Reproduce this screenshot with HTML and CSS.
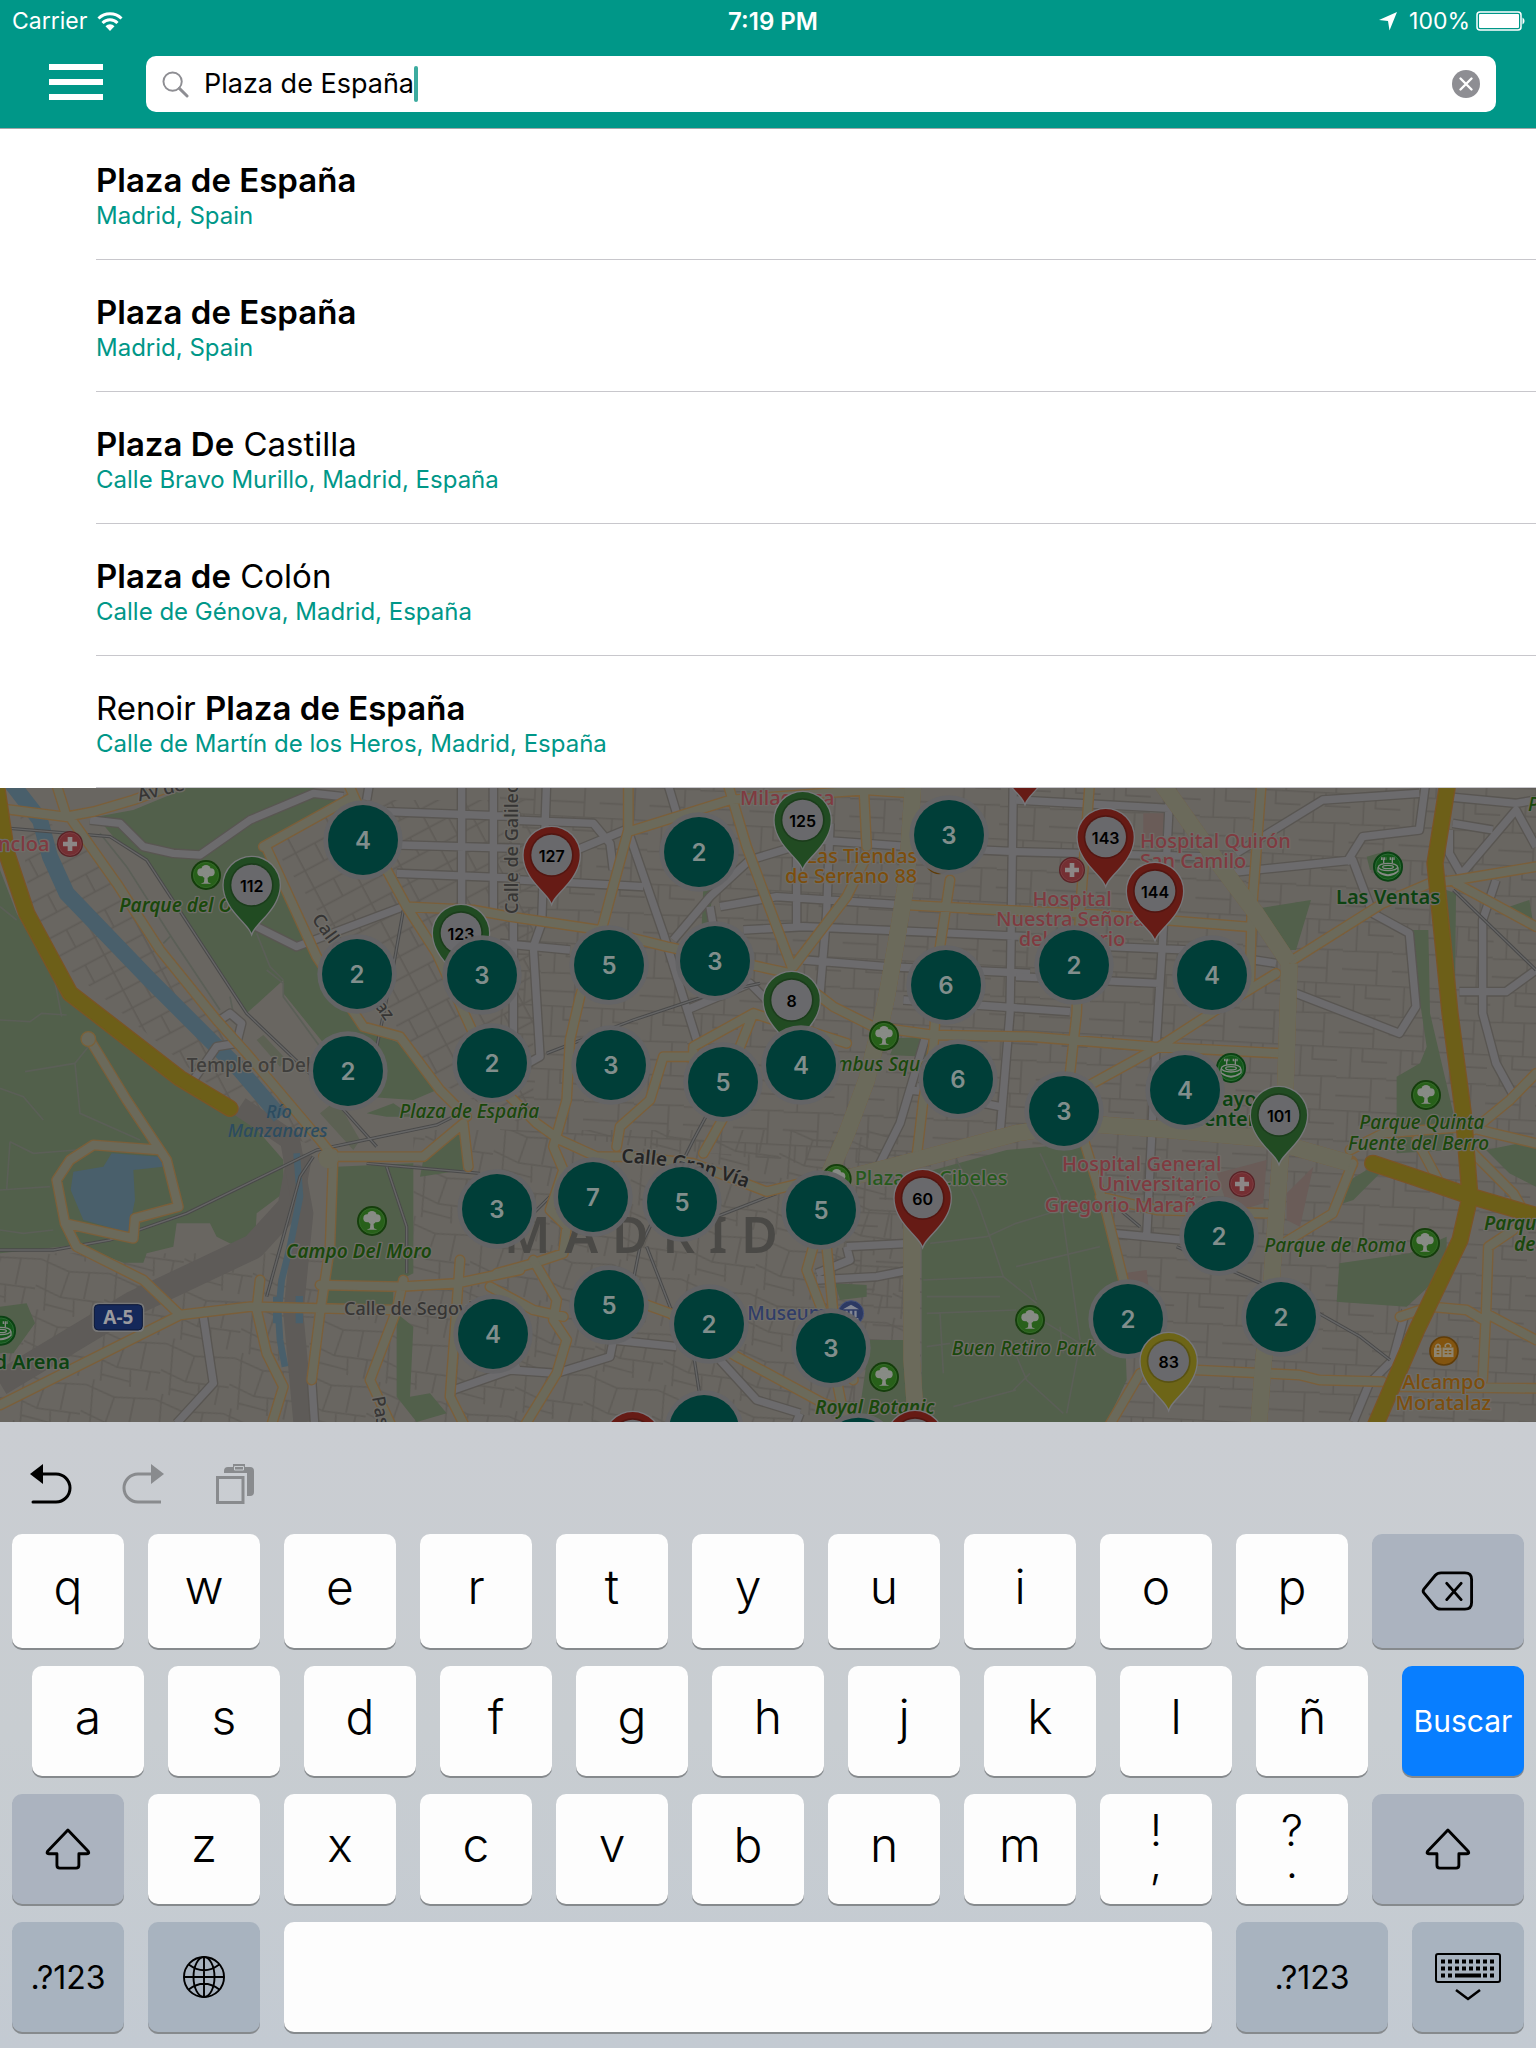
FILE: index.html
```html
<!DOCTYPE html>
<html lang="es">
<head>
<meta charset="utf-8">
<meta name="viewport" content="width=device-width, initial-scale=1">
<title>Plaza de España</title>
<link rel="stylesheet" href="styles.css">
</head>
<body>
<header class="header">
  <div class="status">
    <div class="status-side">
      <span>Carrier</span>
      <svg class="wifi" viewBox="0 0 26 20" aria-hidden="true"><g fill="none" stroke="#fff" stroke-width="3"><path d="M1.500 7.500a16.500 16.500 0 0 1 23 0"/><path d="M5.500 12a10.500 10.500 0 0 1 15 0"/></g><path d="M13 20l-4.500-4.800a6.200 6.200 0 0 1 9 0z" fill="#fff"/></svg>
    </div>
    <time class="clock">7:19 PM</time>
    <div class="status-side status-right">
      <svg class="arrow" viewBox="0 0 18 20" aria-hidden="true"><path d="M18 1L10.500 19.500L9 10L0 9z" fill="#fff"/></svg>
      <span class="percent">100%</span>
      <svg class="battery" viewBox="0 0 50 20" aria-hidden="true"><rect x="1" y="1" width="44" height="18" rx="3" fill="none" stroke="#fff" stroke-width="1.500"/><rect x="3" y="3" width="40" height="14" rx="1" fill="#fff"/><path d="M46.500 6.500a4 4 0 0 1 0 7z" fill="#fff"/></svg>
    </div>
  </div>
  <div class="bar">
    <button class="menu" type="button" aria-label="Menú"><span></span><span></span><span></span></button>
    <form class="search" role="search">
      <svg class="lens" viewBox="0 0 28 28" aria-hidden="true"><g fill="none" stroke="#8e8e93" stroke-width="2"><circle cx="11" cy="11" r="9.500"/><path d="M18 18l8 8" stroke-width="3" stroke-linecap="round"/></g></svg>
      <input class="query" type="text" value="Plaza de España" aria-label="Buscar">
      <span class="caret"></span>
      <button class="clear" type="button" aria-label="Borrar"><svg viewBox="0 0 28 28"><circle cx="14" cy="14" r="14" fill="#8e8e93"/><path d="M8.500 8.500l11 11M19.500 8.500l-11 11" stroke="#fff" stroke-width="2.400" stroke-linecap="round"/></svg></button>
    </form>
  </div>
</header>
<main class="content">
<ul class="results">
  <li><a href="#"><span class="title"><b>Plaza de España</b></span><span class="place">Madrid, Spain</span></a></li>
  <li><a href="#"><span class="title"><b>Plaza de España</b></span><span class="place">Madrid, Spain</span></a></li>
  <li><a href="#"><span class="title"><b>Plaza De</b> Castilla</span><span class="place">Calle Bravo Murillo, Madrid, España</span></a></li>
  <li><a href="#"><span class="title"><b>Plaza de</b> Colón</span><span class="place">Calle de Génova, Madrid, España</span></a></li>
  <li><a href="#"><span class="title">Renoir <b>Plaza de España</b></span><span class="place">Calle de Martín de los Heros, Madrid, España</span></a></li>
</ul>
<div class="map">
<svg viewBox="0 24 4608 1902" preserveAspectRatio="xMidYMid slice">
<defs>
  <pattern id="blocks" width="150" height="190" patternUnits="userSpaceOnUse" patternTransform="rotate(3)"><path d="M0 20H150M0 112L150 108M40 20V110M105 110V210M105 0V20M0 165H105M75 20V60H150" class="block"/></pattern>
  <pattern id="blocks-slant" width="130" height="120" patternUnits="userSpaceOnUse" patternTransform="rotate(-28)"><path d="M0 10H130M0 70H130M30 0V120M95 10V70" class="block"/></pattern>
  <pattern id="blocks-old" width="210" height="170" patternUnits="userSpaceOnUse" patternTransform="rotate(12)"><path d="M0 20L90 40L210 20M20 20L40 170M90 40L80 120L210 110M150 30V110M80 120L0 100M120 115L130 170M20 0V20M40 150L130 155M180 110V170" class="block"/></pattern>
  <g id="cluster"><circle r="119" fill="#646466" opacity=".95"/><circle r="105" fill="#003e38"/></g>
  <path id="drop" d="M0 144C-12 112-84 70-84 0A84 84 0 1 1 84 0C84 70 12 112 0 144z"/>
  <g id="pin"><use href="#drop" stroke="#77777a" stroke-width="8"/><use href="#drop"/><circle r="66" fill="#000" opacity=".18"/><circle r="61" fill="#69696c"/></g>
  <g id="tree"><circle r="45" fill="#153e0c"/><circle r="38" fill="#28601a" stroke="#3c7430" stroke-width="2"/><g fill="#878b85"><circle cx="-14" cy="-8" r="12"/><circle cx="14" cy="-8" r="12"/><circle cy="-16" r="14"/><circle cy="-3" r="12"/><path d="M-4 0h8l2 22 10 4h-32l10-4z"/></g></g>
  <g id="arena"><circle r="45" fill="#0a4213"/><circle r="38" fill="#14571b" stroke="#387841" stroke-width="2"/><g fill="none" stroke="#858985" stroke-width="4"><ellipse cy="1" rx="29" ry="11"/><ellipse cy="1" rx="16" ry="5"/><path d="M-30 2v12q30 22 60 0V2M-13-10v-14M13-10v-14M-28 16q28 22 56 0"/><path d="M-21-24h16M5-24h16" stroke-width="8" stroke-dasharray="5 2"/></g></g>
  <g id="hospital"><circle r="39" fill="#5a2226"/><circle r="34" fill="#742f33" stroke="#85494c" stroke-width="2"/><path d="M-7-21H7V-7H21V7H7V21H-7V7H-21V-7H-7z" fill="#8c8686"/></g>
</defs>

<rect width="4608" height="1950" fill="#696661"/>
<g>
  <path fill="url(#blocks)" d="M1500 0H4608V1950H2500L2400 1150L1500 1050zM3300 1100H4608V1950H3300z"/>
  <path fill="url(#blocks-slant)" d="M820 200L1060 60H1600V1050L1300 900zM60 100L230 160L950 1100L780 1040L100 480z"/>
  <path fill="url(#blocks-old)" d="M1240 1050L2750 1050V1950H0V1420H1240z"/>
</g>

<g fill="#52604b">
  <path d="M0 270L50 400 200 660 550 920 700 1000 720 990 850 1140V1240L770 1300 765 1380 700 1395 650 1370 630 1330H530L520 1400 440 1420 430 1448H370L230 1395 0 1420z"/>
  <path d="M290 110L400 90 560 24H940L1020 70 790 200 950 540 1080 740 1200 790 1310 930 1240 960 1100 950 850 640V600L740 700 660 580 440 240 340 170z"/>
  <path d="M1010 1160L1240 1150V1480L1190 1505H980zM975 1530H1180V1580H970zM1270 1140L1390 1040V1170L1260 1190zM1190 1600L1240 1640 1230 1850 1290 1840 1340 1900 1250 1926 1190 1850zM1100 1000L1180 970 1240 1010 1160 1010z"/>
  <path d="M2765 1180L3020 1110 3240 1090 3370 1500 3380 1800 3310 1950H2765zM2610 1680H2720V1950H2570zM2505 1510L2600 1515 2600 1550 2520 1560z"/>
  <path d="M4228 450H4285L4290 700 4360 1000V1110L4190 1120V890L4260 850 4280 800zM4338 330L4368 340 4365 640 4340 620zM3778 385L3933 360 3888 510H3858zM4018 1450L4228 1420 4340 1370V1470L4220 1580 4010 1565zM4458 1110L4608 1080V1220L4528 1180zM4528 380L4588 360 4598 420zM2690 775L2780 770V830L2670 825zM4050 1200L4100 1170 4140 1180 4060 1260 4030 1270zM4100 230L4170 210 4180 260 4110 270zM0 1580L80 1570 105 1630 40 1720H0zM2110 320H2140L2125 440H2105z"/>
</g>
<g fill="none" stroke="#5e5b58" stroke-linejoin="round">
  <path d="M0 1810L400 1570 760 1400 870 1280 900 1120" stroke-width="75"/>
  <path d="M720 980L870 1080 910 1300 880 1600 910 1926" stroke-width="60"/>
</g>
<path fill="#5c6153" d="M960 1000L1010 960 1080 1080 1060 1110zM770 780L790 765 860 840 840 860z"/>
<g fill="#6a5c58"><path d="M3430 100H3500V180H3430zM3650 1180L3800 1140 3790 1270 3690 1300zM3860 1240L3940 1160 3900 1340 3860 1320zM3370 1480L3440 1470 3450 1560 3390 1540z"/></g>
<g fill="none" stroke="#495f6b" stroke-linejoin="round">
  <path d="M35 10L120 120 150 230 200 340 450 600 620 770 720 870 840 1010" stroke-width="48"/>
  <path d="M890 1120L900 1250 870 1400 845 1500 835 1600 840 1680 855 1760" stroke-width="20"/>
  <path d="M830 1550V1630M898 1548V1630" stroke-width="22"/>
</g>
<path fill="#495f6b" d="M220 1175L310 1160 335 1120 480 1130 490 1160 400 1170 405 1260 385 1358 250 1320 212 1230z"/>

<g class="path">
  <path d="M0 380L50 420M0 720L90 725 125 700 200 705M160 580L185 710M0 925L70 950 130 1020M75 875L225 850 240 1000 420 1080M225 850L265 800M30 1085L100 1120 230 1110M30 1085L20 1230M0 1350L70 1360 160 1350M0 1230L150 1220M300 160L380 260 520 480 660 690M490 490L510 470M700 700L690 650M770 460L810 560 850 600M800 570L850 610 850 650 960 800"/>
  <path d="M2790 1390L2960 1370 3048 1330 3180 1290M2870 1140L2930 1260 2980 1400 3010 1490 3110 1570M2770 1500L3010 1490M2780 1600L3048 1590M2780 1550L3000 1550M2820 1600L2830 1780M2780 1700L2850 1690M2860 1880L3048 1830M3048 1460L3300 1400M3120 1120L3180 1250 3240 1680M3090 1500L3110 1560M3090 1600L3240 1690 3200 1900M3050 1730L3080 1800 3190 1900M3090 1780L3040 1830M3180 1640L3190 1720"/>
</g>

<g class="street">
  <g id="streets"><path d="M270 120L360 130 430 200 520 220 600 225 750 120 940 40 1030 50M770 440L890 500 1210 380M580 900L650 800 710 790 725 730 690 700 660 720M1160 95L1560 110M1200 195L1560 205M1190 280L1560 295M1385 0V380M1480 0V390M1110 0L1100 60M1540 420V800"/>
  <path d="M1640 0L1625 430 1600 500 1620 830 1530 880M1530 120L1780 130 1830 190 1840 270M1730 210L1900 140M1560 300L1930 320M1890 170L1990 460 2090 780M2000 0L2030 100M2260 230L2130 350 2020 480M1500 490L1710 510M2250 240L2450 180 2730 200 3048 215 3608 230M2160 380L2330 350 2710 375M2230 450L2410 440 3090 470M2410 540L2660 560 3090 580M2060 690L2250 610 2390 750M2490 130L2480 400 2460 640M2390 230V440M3040 0L3030 700 3000 1060M2710 660L3210 695M2130 380L2140 440M2750 920L2900 960 3000 980"/>
  <path d="M3048 60L3508 85M3048 590L3478 610M3508 60L3488 480 3468 800 3440 1370M3328 500L3568 510 3828 550M3668 280L4058 240 4118 400 4228 460 4248 680 4198 760 3888 640M3708 220L3968 60 4258 40M4038 250L4088 170 4258 150 4278 0M4338 50L4548 70 4608 60M4378 290L4548 90 4608 200M4358 130L4478 150M4348 150V220L4388 290M4488 300L4448 420V700L4488 850 4548 960M4378 635H4518L4608 570M3338 1360L3548 1380M4218 1590L4178 1740 4108 1810 4060 1926M2540 1400L2730 1390M2540 1400L2550 1440 2450 1480M2450 1500L2630 1490 2730 1470M1530 1770L1670 1780 1830 1730 1840 1680 2030 1700M2160 1740L2270 1860 2400 1900M2400 1900L2380 1950M610 1610L640 1810 530 1930M935 1800L945 1950M1360 1830L1560 1760M2620 1190L2700 1030 2780 760M2730 930L2900 950"/></g>
</g>
<use href="#streets" class="street-fill"/>

<g class="rail">
  <g id="rails"><path d="M30 145L330 170 440 240 740 700 950 900 1130 1100M0 1410L160 1410 330 1380 560 1300 950 1110 1310 1035 1400 990M940 1130L900 1190 800 1550M1100 1150L1440 1180M1160 1160L1220 1340V1480M1210 390L1180 560 1120 850M1640 820L1900 720 2140 640 2280 610M1900 1500L1920 1400 2080 1080 2150 950M1940 1400L2010 1580 2080 1720 2100 1850M2150 1310L2330 1240M3300 1240L3420 1340M3530 1400L3850 1540 4080 1670 4170 1740M4360 330L4608 570M1600 1300L1700 1200"/></g>
</g>
<use href="#rails" class="rail-core"/>

<g class="road">
  <g id="roads"><path d="M0 85L210 112 350 310 480 510 650 720 740 820 960 1080 1000 1130M210 108L280 95 400 60 540 10M165 0L200 110M1060 50L790 200M800 205L950 530 1090 740 1200 770 1320 930 1400 1010M1040 0L1160 270 1220 380 1310 520 1420 760 1480 900 1610 1030 1680 1080 1790 1130 1900 1130 2080 1150 2300 1235 2380 1215 2480 1195M1220 380L1420 390 1530 410 1800 450 2000 500 2370 580M1885 0V150L1810 430 1740 650 1710 780 1700 960 1660 1100 1690 1170 1650 1290 1700 1340 1690 1420 1600 1450 1490 1480M1885 155L2190 60 2600 30 2740 40M2180 0L2240 200 2330 440 2375 560M2600 230L2540 350 2380 560M2370 580L2500 680 2620 740 2800 765 3090 770 3460 800 3840 820M2850 300L2820 500 2800 800 2770 960 2750 1130M2720 375L3000 390 3240 400 3740 440M3270 0L3240 400 3230 700 3210 880M3785 0L3755 400 3750 600M3878 540L4148 370 4288 310 4368 300 4608 260M4368 310L4608 440M3828 580L3648 690 3478 800 3278 910 3150 990M2540 790L2260 700 2080 800 2080 880M2260 700L2200 850M1850 1100L1860 1040 1950 960 1990 830 2070 830M2110 1120L2200 960M2590 0L2600 200"/>
  <path d="M270 780L380 960 480 1110 500 1140 535 1280 405 1315 400 1375 195 1330 170 1200 210 1140 280 1095 480 1110M195 1330L230 1400 430 1500 540 1605 750 1580 960 1585 1190 1590M0 1875L540 1605M780 1500L770 1590 800 1720 850 1820 810 1950M1000 1120L990 1400 960 1600 935 1800M970 1130H1270L1390 1030 1405 1160M960 1515L1200 1520 1370 1510 1560 1470M1210 1500L1190 1590 1110 1800 1180 1950M1380 1440L1350 1850 1400 1950M3248 1070L3320 1300 3370 1500M3588 1770L3898 1785 3958 1800 4148 1805M3420 1780L3320 1950M4058 1150L3998 1300 3850 1390M4540 1350L4465 1400 4458 1600 4608 1680M4458 1600L4448 1800M4200 1820L4608 1825M4050 1110L4150 1060 4400 1040 4480 1060 4608 1090M4400 1100L4540 1240 4580 1310M4608 880L4530 960 4420 1050M4200 1610L4290 1580 4400 1590 4450 1620M4250 1080L4330 1230M2440 1400L2420 1470 2470 1600 2540 1950M2480 1400L2500 1600 2560 1800M1600 1440L1670 1560 1660 1620 1700 1680 1670 1780 1560 1960M1470 1520L1600 1590 1690 1610M1900 1560L2010 1600 2210 1730 2470 1870 2560 1900M3300 1250L3470 1290 3800 1300"/></g>
  <g id="avenues"><path d="M2740 0L2720 300 2690 480 2660 650 2640 740 2600 900 2540 1060 2480 1200M3478 0L3648 240 3768 400 3868 550M3868 550L3855 960 3840 1150 3815 1500 3790 1750 3775 1950M2480 1210L2750 1140 3048 1060 3248 1030 3508 1050 3788 1075 4050 1150M2735 1250V1740L2750 1950"/></g>
</g>
<g class="road-fill"><use href="#roads"/></g>
<g class="avenue-fill"><use href="#avenues"/></g>
<circle cx="265" cy="777" r="22" fill="#6b6a5b" stroke="#7b6138" stroke-width="4"/>
<circle cx="985" cy="1135" r="30" fill="#6b6a5b"/>

<g class="highway">
  <g id="highways"><path d="M-10 20L20 220 80 400 210 640 540 895 690 985M4345 0L4305 250 4320 400 4350 700 4390 1000 4410 1250 4380 1380 4250 1650 4120 1950M4118 1150L4240 1190 4400 1245 4620 1310"/></g>
</g>
<use href="#highways" class="highway-fill"/>

<g transform="translate(355 1612)"><rect x="-78" y="-44" width="156" height="88" rx="16" fill="#777"/><rect x="-72" y="-38" width="144" height="76" rx="12" fill="#14285a" stroke="#0c1838" stroke-width="3"/><text y="20" class="label shield">A-5</text></g>

<g class="label city"><text x="1512" y="1420">MADRID</text></g>
<g class="label street-name">
  <text transform="translate(1553 402) rotate(-90)">Calle de Galileo</text>
  <text transform="translate(418 64) rotate(-14)">Av de</text>
  <text transform="translate(934 418) rotate(54)">Calle de Ferraz</text>
  <text x="1032" y="1604">Calle de Segovia</text>
  <text transform="translate(1116 1852) rotate(80)">Paseo</text>
</g>
<path id="granvia" d="M1864 1148Q2060 1150 2280 1240" fill="none"/>
<text class="label gran-via"><textPath href="#granvia">Calle Gran Vía</textPath></text>
<g class="label temple"><text x="560" y="875">Temple of Debod</text></g>
<g class="label water"><text x="798" y="1014">Río</text><text x="683" y="1072">Manzanares</text></g>
<g class="label park"><text x="1198" y="1015">Plaza de España</text><text x="2392" y="873">Columbus Square</text><text x="4584" y="92">P</text><text x="4078" y="1048">Parque Quinta</text><text x="4044" y="1110">Fuente del Berro</text><text x="4218" y="1415" class="end">Parque de Roma</text><text x="2855" y="1724">Buen Retiro Park</text></g>
<g class="label park strong"><text x="358" y="395">Parque del Oeste</text><text x="858" y="1434">Campo Del Moro</text><text x="4452" y="1350">Parque</text><text x="4542" y="1413">de</text><text x="2445" y="1902">Royal Botanic</text></g>
<g class="label venue"><text x="210" y="1767" class="end">Madrid Arena</text><text x="4164" y="372" class="mid">Las Ventas</text><text x="3610" y="978">Mayo</text><text x="3572" y="1037">Center</text></g>
<g class="label plaza"><text x="2564" y="1215">Plaza de Cibeles</text></g>
<g class="label museum"><text x="2242" y="1620">Museum</text></g>
<g class="label shop"><text x="2752" y="250" class="end">Las Tiendas</text><text x="2752" y="310" class="end">de Serrano 88</text><text x="4332" y="1828" class="mid">Alcampo</text><text x="4330" y="1890" class="mid">Moratalaz</text></g>
<g class="label health"><text x="148" y="213" class="end">Moncloa</text><text x="2220" y="75">Milagrosa</text><text x="3420" y="205">Hospital Quirón</text><text x="3420" y="265">San Camilo</text><text x="3216" y="378" class="mid">Hospital</text><text x="2988" y="437">Nuestra Señora</text><text x="3216" y="497" class="mid">del Rosario</text><text x="3664" y="1173" class="end">Hospital General</text><text x="3664" y="1234" class="end">Universitario</text><text x="3664" y="1295" class="end">Gregorio Marañón</text></g>

<use href="#hospital" x="210" y="192"/><use href="#hospital" x="3216" y="270"/><use href="#hospital" x="3726" y="1212"/>
<use href="#tree" x="618" y="285"/><use href="#tree" x="1116" y="1323"/><use href="#tree" x="2652" y="1791"/>
<use href="#tree" x="2652" y="768"/><use href="#tree" x="4278" y="945"/><use href="#tree" x="4275" y="1389"/><use href="#tree" x="3090" y="1620"/><use href="#tree" x="2510" y="1197"/>
<use href="#arena" x="4164" y="260"/><use href="#arena" x="3693" y="864"/><use href="#arena" x="3" y="1652"/>
<circle cx="2817" cy="240" r="40" fill="#805410" stroke="#5f3c08" stroke-width="5"/>
<g transform="translate(2553 1600)"><circle r="38" fill="#2c3963" stroke="#46527a" stroke-width="3"/><path d="M0-26L24-12H-24zM-22 14H22V20H-22zM-17-8h7v20h-7zM-4-8h8v20h-8zM10-8h7v20h-7z" fill="#838794"/></g>
<g transform="translate(4332 1713)"><circle r="42" fill="#82540f" stroke="#603d09" stroke-width="5"/><g fill="#8d8470"><path d="M-30-10H4V18H-30z"/><path d="M-6-12H30V20H-6z" stroke="#82540f" stroke-width="3"/></g><path d="M-24-10v-6q6-8 12 0v6M4-12v-6q8-9 16 0v6" fill="none" stroke="#8d8470" stroke-width="5"/><path d="M-22-1h8M-22 8h8M2-1h8M14-1h8M2 8h8M14 8h8" stroke="#82540f" stroke-width="4"/></g>

<g class="green">
  <g transform="translate(755 315)"><use href="#pin"/><text y="20">112</text></g>
  <g transform="translate(1383 459)"><use href="#pin"/><text y="20">123</text></g>
  <g transform="translate(2408 120)"><use href="#pin"/><text y="20">125</text></g>
  <g transform="translate(2375 660)"><use href="#pin"/><text y="20">8</text></g>
  <g transform="translate(3837 1005)"><use href="#pin"/><text y="20">101</text></g>
</g>
<g class="red">
  <g transform="translate(1655 225)"><use href="#pin"/><text y="20">127</text></g>
  <g transform="translate(3317 171)"><use href="#pin"/><text y="20">143</text></g>
  <g transform="translate(3465 333)"><use href="#pin"/><text y="20">144</text></g>
  <g transform="translate(2768 1254)"><use href="#pin"/><text y="20">60</text></g>
  <use href="#pin" x="3075" y="-75"/>
  <use href="#pin" x="1898" y="1980"/>
</g>
<g class="count">
  <g transform="translate(1089 180)"><use href="#cluster"/><text y="26">4</text></g>
  <g transform="translate(1071 582)"><use href="#cluster"/><text y="26">2</text></g>
  <g transform="translate(1446 585)"><use href="#cluster"/><text y="26">3</text></g>
  <g transform="translate(1044 873)"><use href="#cluster"/><text y="26">2</text></g>
  <g transform="translate(1476 849)"><use href="#cluster"/><text y="26">2</text></g>
  <g transform="translate(2097 216)"><use href="#cluster"/><text y="26">2</text></g>
  <g transform="translate(2847 165)"><use href="#cluster"/><text y="26">3</text></g>
  <g transform="translate(1827 555)"><use href="#cluster"/><text y="26">5</text></g>
  <g transform="translate(2145 543)"><use href="#cluster"/><text y="26">3</text></g>
  <g transform="translate(2838 615)"><use href="#cluster"/><text y="26">6</text></g>
  <g transform="translate(1833 855)"><use href="#cluster"/><text y="26">3</text></g>
  <g transform="translate(2169 906)"><use href="#cluster"/><text y="26">5</text></g>
  <g transform="translate(2403 855)"><use href="#cluster"/><text y="26">4</text></g>
  <g transform="translate(2874 897)"><use href="#cluster"/><text y="26">6</text></g>
  <g transform="translate(3222 555)"><use href="#cluster"/><text y="26">2</text></g>
  <g transform="translate(3636 585)"><use href="#cluster"/><text y="26">4</text></g>
  <g transform="translate(3192 993)"><use href="#cluster"/><text y="26">3</text></g>
  <g transform="translate(3555 930)"><use href="#cluster"/><text y="26">4</text></g>
  <g transform="translate(1491 1287)"><use href="#cluster"/><text y="26">3</text></g>
  <g transform="translate(1479 1662)"><use href="#cluster"/><text y="26">4</text></g>
  <g transform="translate(1779 1251)"><use href="#cluster"/><text y="26">7</text></g>
  <g transform="translate(2046 1266)"><use href="#cluster"/><text y="26">5</text></g>
  <g transform="translate(2463 1290)"><use href="#cluster"/><text y="26">5</text></g>
  <g transform="translate(1827 1575)"><use href="#cluster"/><text y="26">5</text></g>
  <g transform="translate(2127 1632)"><use href="#cluster"/><text y="26">2</text></g>
  <g transform="translate(2493 1704)"><use href="#cluster"/><text y="26">3</text></g>
  <g transform="translate(3657 1368)"><use href="#cluster"/><text y="26">2</text></g>
  <g transform="translate(3384 1617)"><use href="#cluster"/><text y="26">2</text></g>
  <g transform="translate(3843 1611)"><use href="#cluster"/><text y="26">2</text></g>
  <use href="#cluster" x="2112" y="1950"/><use href="#cluster" x="2575" y="2018"/>
</g>
<g class="red"><use href="#pin" x="2745" y="1977"/></g>
<g class="yellow"><g transform="translate(3506 1743)"><use href="#pin"/><text y="20">83</text></g></g>
</svg>
</div>
</main>
<section class="keyboard" aria-label="Teclado">
  <div class="tools">
    <button type="button" aria-label="Deshacer"><svg viewBox="0 0 44 40"><path d="M0 10L13 0V20z"/><path d="M12 10H26a14 14 0 0 1 0 28H3" fill="none" stroke="#000" stroke-width="3" stroke-linecap="round"/></svg></button>
    <button type="button" aria-label="Rehacer" disabled><svg viewBox="0 0 44 40"><g fill="#898b8e"><path d="M42 10L29 0V20z"/><path d="M30 10H16a14 14 0 0 0 0 28H39" fill="none" stroke="#898b8e" stroke-width="3"/></g></svg></button>
    <button type="button" aria-label="Pegar" disabled><svg viewBox="0 0 44 40"><path d="M3.500 13.500H29V38.500H3.500z" fill="none" stroke="#898b8e" stroke-width="3"/><path d="M10 9V7q0-4 4-4H36q4 0 4 4V28q0 4-4 4H33V9z" fill="#898b8e"/><path d="M19 0H31V7H19z" fill="#898b8e"/><path d="M20.500 2.500H29.500V6H20.500z" fill="none" stroke="#c9cdd1"/></svg></button>
  </div>
  <div class="row row-top">
    <button type="button" class="key">q</button><button type="button" class="key">w</button><button type="button" class="key">e</button><button type="button" class="key">r</button><button type="button" class="key">t</button><button type="button" class="key">y</button><button type="button" class="key">u</button><button type="button" class="key">i</button><button type="button" class="key">o</button><button type="button" class="key">p</button>
    <button type="button" class="key mod wide" aria-label="Retroceso"><svg class="glyph" viewBox="0 0 56 44"><path d="M21 3H46q7 0 7 7V34q0 7-7 7H21q-4 0-6-2.500L3 24q-1.500-2 0-4L15 5.500Q17 3 21 3M27 14L42 31M42 14L27 31" fill="none" stroke="#000" stroke-width="3" stroke-linecap="round"/></svg></button>
  </div>
  <div class="row row-home">
    <button type="button" class="key">a</button><button type="button" class="key">s</button><button type="button" class="key">d</button><button type="button" class="key">f</button><button type="button" class="key">g</button><button type="button" class="key">h</button><button type="button" class="key">j</button><button type="button" class="key">k</button><button type="button" class="key">l</button><button type="button" class="key">ñ</button>
    <button type="submit" class="key go">Buscar</button>
  </div>
  <div class="row">
    <button type="button" class="key mod" aria-label="Mayúsculas"><svg class="glyph" viewBox="0 0 48 44"><path d="M24 2L45 24q2 3-1 3H35.500V39q0 3-3 3H15.500q-3 0-3-3V27H4q-3 0-1-3z" fill="none" stroke="#000" stroke-width="3" stroke-linejoin="round"/></svg></button>
    <button type="button" class="key">z</button><button type="button" class="key">x</button><button type="button" class="key">c</button><button type="button" class="key">v</button><button type="button" class="key">b</button><button type="button" class="key">n</button><button type="button" class="key">m</button>
    <button type="button" class="key dual">!<br>,</button><button type="button" class="key dual">?<br>.</button>
    <button type="button" class="key mod wide" aria-label="Mayúsculas"><svg class="glyph" viewBox="0 0 48 44"><path d="M24 2L45 24q2 3-1 3H35.500V39q0 3-3 3H15.500q-3 0-3-3V27H4q-3 0-1-3z" fill="none" stroke="#000" stroke-width="3" stroke-linejoin="round"/></svg></button>
  </div>
  <div class="row row-bottom">
    <button type="button" class="key mod text">.?123</button>
    <button type="button" class="key mod" aria-label="Cambiar idioma"><svg class="glyph" viewBox="0 0 44 44"><g fill="none" stroke="#000" stroke-width="2"><circle cx="22" cy="22" r="21"/><ellipse cx="22" cy="22" rx="11" ry="21"/><path d="M22 1V43M1 22H43M6 9q16 12 32 0M6 35q16-12 32 0"/></g></svg></button>
    <button type="button" class="key space" aria-label="Espacio"></button>
    <button type="button" class="key mod wide text">.?123</button>
    <button type="button" class="key mod" aria-label="Ocultar teclado"><svg class="glyph tall" viewBox="0 0 66 48"><g fill="none" stroke="#000"><rect x="1" y="1" width="64" height="28" rx="2" stroke-width="2"/><path d="M6 8.500H60M6 15.500H60" stroke-width="4" stroke-dasharray="4 3"/><path d="M6 22.500H18M48 22.500H60" stroke-width="4" stroke-dasharray="4 3"/><path d="M20 22.500H46" stroke-width="4"/><path d="M21 37L33 46L45 37" stroke-width="2.500"/></g></svg></button>
  </div>
</section>
</body>
</html>
```
FILE: styles.css
```css
* { box-sizing: border-box; }

body {
  margin: 0;
  min-height: 100vh;
  display: flex;
  flex-direction: column;
  background: #fff;
  color: #000;
  font-family: Inter, "Liberation Sans", sans-serif;
}

button {
  margin: 0;
  padding: 0;
  border: 0;
  background: none;
  color: inherit;
  font: inherit;
}

button svg { display: block; }

/* Header */
.header {
  height: 128px;
  background: #009788;
  box-shadow: 0 1px 0 #a4a6a8;
}

.status {
  display: flex;
  align-items: center;
  height: 42px;
  padding: 0 10px 0 12px;
  color: #fff;
  font-size: 23px;
}

.status-side {
  flex: 1;
  display: flex;
  align-items: center;
  gap: 10px;
}

.status-right { justify-content: flex-end; gap: 6px; }
.clock { padding-left: 8px; font-size: 24px; font-weight: 600; }
.wifi { width: 26px; height: 20px; }
.arrow { width: 18px; height: 20px; margin-right: 6px; }
.battery { width: 50px; height: 20px; }

.bar {
  display: flex;
  align-items: center;
  gap: 43px;
  padding: 14px 40px 16px 49px;
}

.menu {
  display: grid;
  gap: 9px;
  width: 54px;
  padding-bottom: 4px;
}

.menu span { height: 6px; background: #fff; }

.search {
  flex: 1;
  display: flex;
  align-items: center;
  height: 56px;
  padding: 0 16px;
  border-radius: 10px;
  background: #fff;
}

.lens { width: 27px; height: 27px; margin-right: 15px; }

.query {
  field-sizing: content;
  min-width: 10px;
  height: 40px;
  padding: 0 0 2px;
  border: 0;
  outline: 0;
  background: none;
  font: inherit;
  font-size: 27px;
}

.caret { width: 4px; height: 36px; border-radius: 2px; background: #3cab9f; }
.clear { width: 28px; height: 28px; margin-left: auto; }

/* Results */
.content {
  flex: 1;
  display: flex;
  flex-direction: column;
}

.results { margin: 0; padding: 0; list-style: none; }
.results li { padding-left: 96px; }

.results a {
  display: block;
  height: 132px;
  padding-top: 32px;
  border-bottom: 1px solid #c8c7cc;
  color: inherit;
  text-decoration: none;
}

.title, .place { display: block; }
.title { font-size: 33px; line-height: 40px; }
.title b { font-weight: 600; }
.place { color: #009788; font-size: 24px; line-height: 32px; }

/* Map */
.map {
  flex: 1;
  min-height: 300px;
  display: grid;
  overflow: hidden;
  background: #696661;
}

.map svg { width: 100%; height: 100%; min-height: 0; }

.block { fill: none; stroke: #5f5c57; stroke-width: 5; }
.path { fill: none; stroke: #5b5f57; stroke-width: 5; }
.street, .road, .highway { fill: none; stroke-linejoin: round; }
.street { stroke: #595652; stroke-width: 30; }
.street-fill { fill: none; stroke: #6c6b6d; stroke-width: 22; stroke-linejoin: round; }
.rail { fill: none; stroke: #4a4a4a; stroke-width: 10; }
.rail-core { fill: none; stroke: #666; stroke-width: 4; }
.road { stroke: #7b5f3a; stroke-width: 33; stroke-linecap: round; }
#avenues { stroke-width: 50; }
.road-fill { fill: none; stroke: #6b6a5b; stroke-width: 25; stroke-linejoin: round; stroke-linecap: round; }
.avenue-fill { fill: none; stroke: #6b6a5b; }
.avenue-fill use { stroke-width: 40; }
.highway { stroke: #7a5525; stroke-width: 52; stroke-linecap: round; }
.highway-fill { fill: none; stroke: #6d5f18; stroke-width: 44; stroke-linejoin: round; stroke-linecap: round; }

.label {
  font-family: "Noto Sans", "Open Sans", sans-serif;
  font-size: 57px;
  font-weight: 500;
  paint-order: stroke;
  stroke: #6e6c67;
  stroke-width: 8px;
  stroke-linejoin: round;
}

.end { text-anchor: end; }
.mid { text-anchor: middle; }
.street-name { fill: #363534; font-size: 54px; }
.gran-via { fill: #242424; font-weight: 600; }
.temple { fill: #3f3e3c; }
.water { fill: #2c4c60; font-size: 54px; font-style: italic; stroke: none; }
.park { fill: #1a480c; font-style: italic; }
.strong { font-size: 57px; font-weight: 600; }
.venue { fill: #0c4311; font-size: 60px; font-weight: 600; }
.plaza { fill: #265a1c; font-size: 60px; }
.museum { fill: #303d68; }
.shop { fill: #7d4e0c; font-size: 60px; }
.health { fill: #803a40; font-size: 60px; }
.shield { fill: #9a9a9e; font-weight: 700; text-anchor: middle; stroke: none; }

.city {
  fill: #4a4946;
  font-size: 150px;
  font-weight: 600;
  letter-spacing: 42px;
  stroke: none;
}

.green, .red, .yellow {
  font-size: 48px;
  font-weight: 600;
  text-anchor: middle;
}

.green use { fill: #214b22; }
.red use { fill: #661b15; }
.yellow use { fill: #6d6517; }
.green text, .red text, .yellow text { fill: #000; }

.count {
  fill: #818e8c;
  font-size: 72px;
  font-weight: 600;
  text-anchor: middle;
}

/* Keyboard */
.keyboard {
  display: grid;
  gap: 18px;
  padding-bottom: 16px;
  background: linear-gradient(#cacdd2, #c8cdd1 50%, #c3cad2);
}

.tools {
  display: flex;
  gap: 48px;
  height: 94px;
  padding: 42px 30px 12px;
}

.tools button { display: flex; align-items: flex-start; }
.tools svg { width: 44px; height: 40px; }

.row {
  display: flex;
  gap: 24px;
  height: 110px;
  padding: 0 12px;
}

.row-top { height: 114px; }
.row-home { padding-left: 32px; }

.key {
  flex: 112 1 0;
  min-width: 0;
  display: flex;
  align-items: center;
  justify-content: center;
  padding-bottom: 9px;
  border-radius: 10px;
  background: #fdfdfd;
  box-shadow: 0 2px 0 #868a8d;
  font-size: 48px;
  font-weight: 350;
}

.mod { padding: 0; background: #abb3bf; }
.row-bottom .mod { background: #a8b3bf; }
.wide { flex-grow: 152; }
.space { flex-grow: 928; }
.text { font-size: 32px; font-weight: 400; }

.go {
  flex-grow: 122;
  margin-left: 10px;
  padding: 0;
  background: #087eff;
  color: #fff;
  font-size: 30px;
  font-weight: 400;
}

.dual {
  padding-bottom: 6px;
  font-size: 44px;
  line-height: 32px;
}

.glyph { height: 42px; }
.tall { height: 48px; }
```
